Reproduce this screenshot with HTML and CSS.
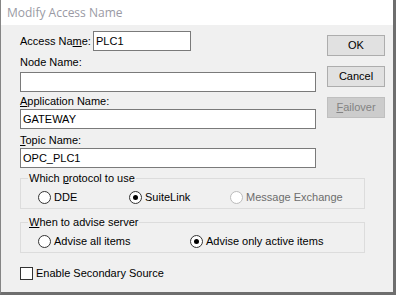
FILE: index.html
```html
<!DOCTYPE html>
<html lang="en">
<head>
  <meta charset="UTF-8" />
  <title>Modify Access Name</title>
  <link rel="stylesheet" href="styles.css">
</head>
<body>
  <div class="window">
    <div class="titlebar">Modify Access Name</div>

    <div class="client">
      <div class="top">
        <div class="fields">
          <div class="access-row">
            <span class="access-label">Access Na<u>m</u>e:</span>
            <div class="textbox access-box">PLC1</div>
          </div>

          <div class="label node-label">Node Name:</div>
          <div class="textbox node-box"></div>

          <div class="label app-label"><u>A</u>pplication Name:</div>
          <div class="textbox app-box">GATEWAY</div>

          <div class="label topic-label"><u>T</u>opic Name:</div>
          <div class="textbox topic-box">OPC_PLC1</div>
        </div>

        <div class="buttons">
          <div class="btn">OK</div>
          <div class="btn">Cancel</div>
          <div class="btn disabled"><u>F</u>ailover</div>
        </div>
      </div>

      <div class="group protocol-group">
        <span class="legend">Which <u>p</u>rotocol to use</span>
        <div class="radio-row">
          <div class="opt opt-dde"><span class="radio"></span>DDE</div>
          <div class="opt opt-suite"><span class="radio checked"></span>SuiteLink</div>
          <div class="opt disabled"><span class="radio"></span>Message Exchange</div>
        </div>
      </div>

      <div class="group advise-group">
        <span class="legend"><u>W</u>hen to advise server</span>
        <div class="radio-row">
          <div class="opt opt-all"><span class="radio"></span>Advise all items</div>
          <div class="opt"><span class="radio checked"></span>Advise only active items</div>
        </div>
      </div>

      <div class="check-row">
        <span class="checkbox"></span>Enable Secondary Source
      </div>
    </div>
  </div>
</body>
</html>
```

FILE: styles.css
```css
body {
  margin: 0; padding: 0;
  width: 396px; height: 295px;
  overflow: hidden;
  font-family: "Liberation Sans", Arial, sans-serif;
  font-size: 11px;
  color: #000;
}

.window {
  box-sizing: border-box;
  width: 396px; height: 295px;
  border-left: 1px solid #858585;
  border-right: 3px solid #6e6e6e;
  border-bottom: 3px solid #6e6e6e;
  background: #f0f0f0;
  display: flex; flex-direction: column;
}

.titlebar {
  height: 25px; line-height: 25px;
  background: #fff;
  padding-left: 6px;
  font-family: "Open Sans", "Noto Sans", sans-serif;
  font-size: 12px;
  color: #9a9aa4;
}

.client {
  padding: 6px 0 0 19px;
  line-height: 13px;
}

.top { display: flex; }
.fields { width: 296px; display: flex; flex-direction: column; }

.access-row { display: flex; align-items: center; }
.access-label { width: 73px; }

.textbox {
  box-sizing: border-box;
  height: 20px;
  border: 1px solid #7a7a7a;
  background: #fff;
  padding: 0 2px;
  display: flex; align-items: center;
}
.access-box { width: 98px; }

.node-label { margin-top: 5px; }
.node-box { margin-top: 3px; }
.app-label { margin-top: 3px; }
.app-box { margin-top: 1px; }
.topic-label { margin-top: 5px; }
.topic-box { margin-top: 1px; }

.buttons {
  margin-left: 11px;
  padding-top: 4px;
  display: flex; flex-direction: column; gap: 10px;
}
.btn {
  box-sizing: border-box;
  width: 58px; height: 21px;
  border: 1px solid #adadad;
  background: #e1e1e1;
  display: flex; align-items: center; justify-content: center;
}
.btn.disabled {
  background: #cccccc;
  border-color: #bfbfbf;
  color: #838383;
}

.group {
  position: relative;
  box-sizing: border-box;
  width: 345px; height: 31px;
  border: 1px solid #dcdcdc;
  padding: 12px 0 0 17px;
}
.protocol-group { margin-top: 10px; }
.advise-group { margin-top: 13px; }

.legend {
  position: absolute; top: -7px; left: 7px;
  padding: 0 1px;
  background: #f0f0f0;
}

.radio-row { display: flex; height: 13px; align-items: center; }
.opt { display: flex; align-items: center; gap: 3px; }
.opt-dde { width: 91px; }
.opt-suite { width: 101px; }
.opt-all { width: 152px; }
.opt.disabled { color: #6d6d6d; }

.radio {
  box-sizing: border-box;
  width: 13px; height: 13px;
  border: 1px solid #333;
  border-radius: 50%;
  background: #fff;
  display: flex; align-items: center; justify-content: center;
}
.radio.checked::after {
  content: "";
  width: 5px; height: 5px;
  border-radius: 50%;
  background: #000;
}
.opt.disabled .radio { border-color: #bcbcbc; }

.check-row {
  margin-top: 14px;
  display: flex; align-items: center; gap: 3px;
  height: 13px;
}
.checkbox {
  box-sizing: border-box;
  width: 13px; height: 13px;
  border: 1px solid #333;
  background: #fff;
}
```
